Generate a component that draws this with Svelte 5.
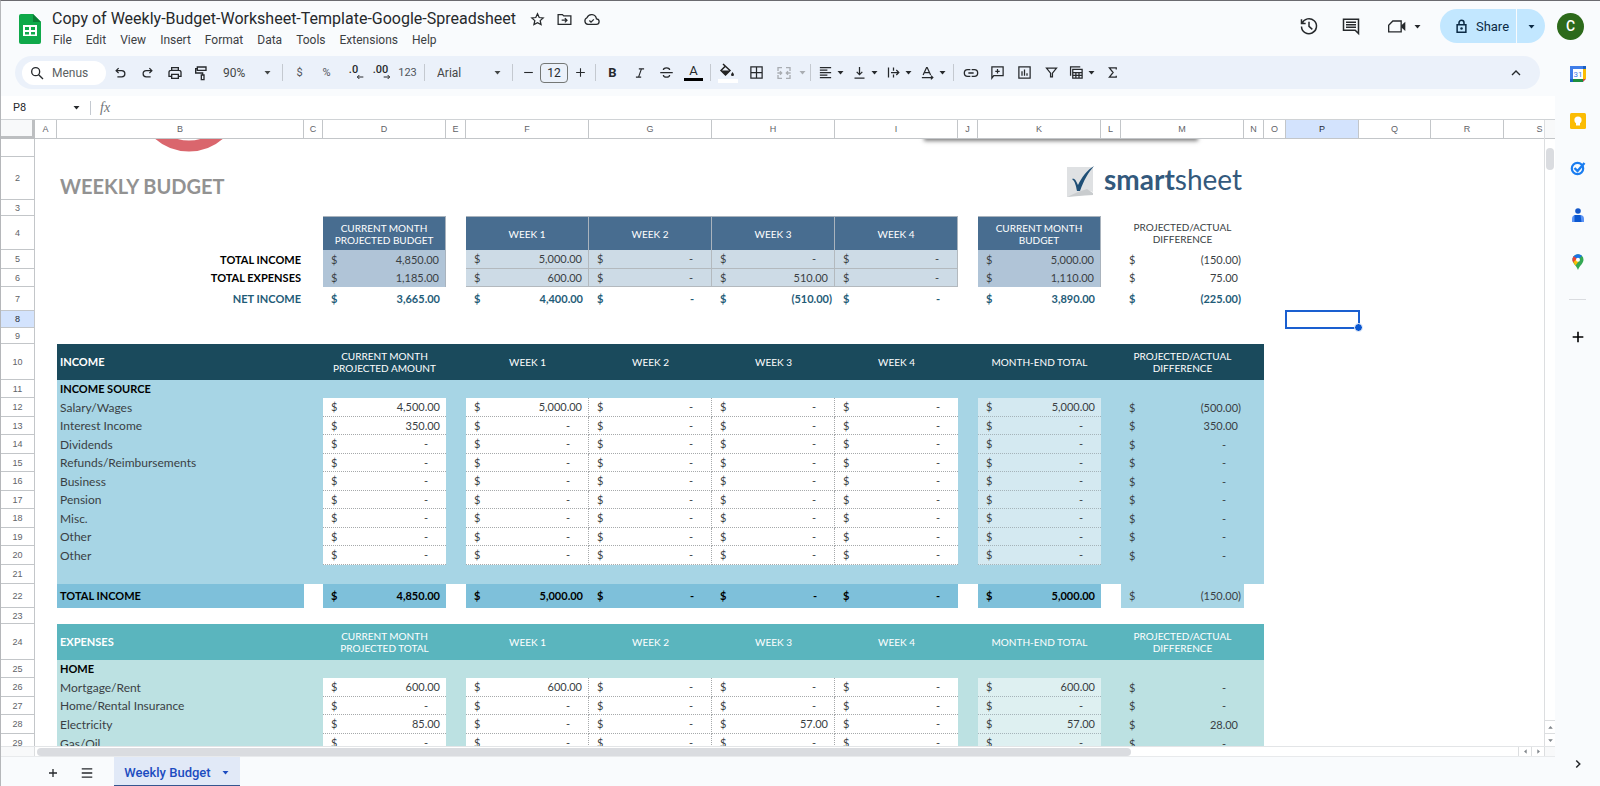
<script>
  const menus = ['File', 'Edit', 'View', 'Insert', 'Format', 'Data', 'Tools', 'Extensions', 'Help'];
  const cols = 'ABCDEFGHIJKLMNOPQRS'.split('');
  const moneyCols = ['D', 'F', 'G', 'H', 'I', 'K', 'M'];

  // s = stroked path, f = filled path, both on a 24 x 24 grid
  const icons = {
    star: { s: 'M12 4l2.4 5.2 5.6.6-4.2 3.8 1.2 5.6-5-2.8-5 2.8 1.2-5.6L4 9.8l5.6-.6z' },
    move: { s: 'M3 5h6l2 2h10v12H3zM8 13h7M12.500 10l3 3-3 3' },
    cloud: { s: 'M7 19h11.500a4 4 0 0 0 .5-8 7 7 0 0 0-13.400-1.500A5 5 0 0 0 7 19zM9 13.500l2.300 2.300 4-4' },
    history: { s: 'M3 4v5h5M3.600 9A9 9 0 1 1 3 12.500M12 7v5.500l4 3.500' },
    comments: { s: 'M21 21l-4-4H3V4h18zM6 7.500h12M6 10.500h12M6 13.500h12' },
    video: { s: 'M7 6h10v13H2v-8z', f: 'M17 11.500l5-4.500v11l-5-4.500z' },
    lock: { s: 'M5 9h14v12H5zM8 9V6a4 4 0 0 1 8 0v3', f: 'M12 13a2 2 0 1 0 0 4 2 2 0 0 0 0-4z' },
    search: { s: 'M10 4a6 6 0 1 0 0 12 6 6 0 0 0 0-12zM14.500 14.500L21 21' },
    undo: { s: 'M5 9h9a5 5 0 0 1 0 10H7M9 5L5 9l4 4' },
    redo: { s: 'M19 9h-9a5 5 0 0 0 0 10h7M15 5l4 4-4 4' },
    print: { s: 'M7 8V4h10v4M7 17H3v-6a3 3 0 0 1 3-3h12a3 3 0 0 1 3 3v6h-4M7 14h10v6H7z' },
    paint: { s: 'M5 3h13v5H5zM5 5.500H2.500V12H13v3M11 15h4v7h-4z' },
    italic: { s: 'M10 5h9M5 19h9M14.500 5l-5 14' },
    strike: { s: 'M2 12h20M17 8c0-2-2-3.500-5-3.500S7 6 7 8M7 16c0 2 2 3.500 5 3.500s5-1.500 5-3.500' },
    borders: { s: 'M3 3h18v18H3zM12 3v18M3 12h18' },
    merge: { s: 'M9 4H3v5M3 15v5h6M15 4h6v5M21 15v5h-6M2 12h6M6 9.500L8.500 12 6 14.500M22 12h-6M18 9.500L15.500 12l2.500 2.500' },
    left: { s: 'M3 4h18M3 8h12M3 12h18M3 16h12M3 20h18' },
    bottom: { s: 'M12 3v12M7.500 11l4.500 4.500 4.500-4.500M4 21h16' },
    wrap: { s: 'M4 4v16M12 4v5M12 15v5M8 12h12M16.500 8l4 4-4 4' },
    rotate: { s: 'M5 16L10.500 4h1L17 16M7 12h8M3 20h17M17.500 17l3 3-3 3' },
    link: { s: 'M11 7H7a5 5 0 0 0 0 10h4M13 7h4a5 5 0 0 1 0 10h-4M8 12h8' },
    comment: { s: 'M3 21V3h18v14H6zM12 6.500v7M8.500 10h7' },
    chart: { s: 'M3 3h18v18H3zM8 10v7M12 7v10M16 13v4' },
    filter: { s: 'M4 5h16l-6.500 8v6h-3v-6z' },
    views: { s: 'M6 7h15v14H6zM6 12h15M6 16.500h15M11 12v9M16 12v9M2.500 17V3H18' },
    sigma: { s: 'M18 7V4.500H7L13 12l-6 7.500h11V17' },
    up: { s: 'M6 15l6-6 6 6' },
    next: { s: 'M9 6l6 6-6 6' },
    plus: { s: 'M12 4v16M4 12h16' },
    minus: { s: 'M4 12h16' },
    list: { s: 'M3 5h18M3 12h18M3 19h18' },
    down: { f: 'M4 8h16l-8 9z' },
    upFill: { f: 'M4 16h16l-8-9z' },
    leftFill: { f: 'M16 4v16l-9-8z' },
    rightFill: { f: 'M8 4v16l9-8z' },
    arrowLeft: { s: 'M22 12H4M10 6l-6 6 6 6' },
    arrowRight: { s: 'M2 12h18M14 6l6 6-6 6' },
  };

  const empty = ['-', '-', '-', '-', '-', '-', '-'];
  const item = (n, h, label, values = empty) => ({ n, h, kind: 'item', label, values });

  const rows = [
    { n: '', h: 18, kind: 'blank' },
    { n: 2, h: 43, kind: 'title', label: 'WEEKLY BUDGET' },
    { n: 3, h: 16, kind: 'blank' },
    { n: 4, h: 34, kind: 'sumhead', heads: ['CURRENT MONTH\nPROJECTED BUDGET', 'WEEK 1', 'WEEK 2', 'WEEK 3', 'WEEK 4', 'CURRENT MONTH\nBUDGET', 'PROJECTED/ACTUAL\nDIFFERENCE'] },
    { n: 5, h: 19, kind: 'sum', label: 'TOTAL INCOME', values: ['4,850.00', '5,000.00', '-', '-', '-', '5,000.00', '(150.00)'] },
    { n: 6, h: 18, kind: 'sum', label: 'TOTAL EXPENSES', values: ['1,185.00', '600.00', '-', '510.00', '-', '1,110.00', '75.00'] },
    { n: 7, h: 24, kind: 'net', label: 'NET INCOME', values: ['3,665.00', '4,400.00', '-', '(510.00)', '-', '3,890.00', '(225.00)'] },
    { n: 8, h: 17, kind: 'blank' },
    { n: 9, h: 16, kind: 'blank' },
    { n: 10, h: 36, kind: 'head', label: 'INCOME', heads: ['CURRENT MONTH\nPROJECTED AMOUNT', 'WEEK 1', 'WEEK 2', 'WEEK 3', 'WEEK 4', 'MONTH-END TOTAL', 'PROJECTED/ACTUAL\nDIFFERENCE'] },
    { n: 11, h: 18, kind: 'section', label: 'INCOME SOURCE' },
    item(12, 19, 'Salary/Wages', ['4,500.00', '5,000.00', '-', '-', '-', '5,000.00', '(500.00)']),
    item(13, 18, 'Interest Income', ['350.00', '-', '-', '-', '-', '-', '350.00']),
    item(14, 19, 'Dividends'),
    item(15, 18, 'Refunds/Reimbursements'),
    item(16, 19, 'Business'),
    item(17, 18, 'Pension'),
    item(18, 19, 'Misc.'),
    item(19, 18, 'Other'),
    item(20, 19, 'Other'),
    { n: 21, h: 19, kind: 'section' },
    { n: 22, h: 24, kind: 'total', label: 'TOTAL INCOME', values: ['4,850.00', '5,000.00', '-', '-', '-', '5,000.00', '(150.00)'] },
    { n: 23, h: 16, kind: 'blank' },
    { n: 24, h: 36, kind: 'head', label: 'EXPENSES', heads: ['CURRENT MONTH\nPROJECTED TOTAL', 'WEEK 1', 'WEEK 2', 'WEEK 3', 'WEEK 4', 'MONTH-END TOTAL', 'PROJECTED/ACTUAL\nDIFFERENCE'] },
    { n: 25, h: 18, kind: 'section', label: 'HOME' },
    item(26, 19, 'Mortgage/Rent', ['600.00', '600.00', '-', '-', '-', '600.00', '-']),
    item(27, 18, 'Home/Rental Insurance'),
    item(28, 19, 'Electricity', ['85.00', '-', '-', '57.00', '-', '57.00', '28.00']),
    item(29, 19, 'Gas/Oil'),
  ];

  const at = (list, col) => (list ? list[moneyCols.indexOf(col)] : undefined);
  const shape = (v) => (v === '-' ? 'dash' : v.startsWith('(') ? 'neg' : '');
</script>

{#snippet icon(name, size = 16, width = 2)}
  <svg viewBox="0 0 24 24" width={size} height={size} aria-hidden="true">
    {#if icons[name].s}
      <path d={icons[name].s} fill="none" stroke="currentColor" stroke-width={width} />
    {/if}
    {#if icons[name].f}
      <path d={icons[name].f} fill="currentColor" />
    {/if}
  </svg>
{/snippet}

{#snippet tool(name, label, size = 16)}
  <button class="tool" aria-label={label}>{@render icon(name, size)}</button>
{/snippet}

{#snippet split(name, label)}
  <button class="split" aria-label={label}>
    <span class="split-icon">{@render icon(name, 15)}</span>
    {@render icon('down', 9)}
  </button>
{/snippet}

<div class="app">
  <header>
    <svg class="logo" viewBox="0 0 22 30" width="22" height="30" aria-hidden="true">
      <path d="M2 0h12l8 8v20a2 2 0 0 1-2 2H2a2 2 0 0 1-2-2V2a2 2 0 0 1 2-2z" fill="#0fa94a" />
      <path d="M14 0l8 8h-8z" fill="#0b7d35" />
      <path d="M4 11h14v11H4z" fill="#fff" />
      <path d="M6 13h4v3H6zM12 13h4v3h-4zM6 18h4v2.500H6zM12 18h4v2.500h-4z" fill="#0fa94a" />
    </svg>
    <div class="doc">
      <div class="title-row">
        <h1>Copy of Weekly-Budget-Worksheet-Template-Google-Spreadsheet</h1>
        <button aria-label="Star">{@render icon('star', 17, 1.8)}</button>
        <button aria-label="Move">{@render icon('move', 17, 1.8)}</button>
        <button aria-label="Saved to Drive">{@render icon('cloud', 17, 1.8)}</button>
      </div>
      <nav>
        {#each menus as menu}
          <button>{menu}</button>
        {/each}
      </nav>
    </div>
    <div class="actions">
      <button aria-label="Version history">{@render icon('history', 20, 1.8)}</button>
      <button aria-label="Comments">{@render icon('comments', 20, 1.8)}</button>
      <button class="meet" aria-label="Join a call">{@render icon('video', 20, 1.6)}{@render icon('down', 9)}</button>
      <div class="share">
        <button class="share-main">{@render icon('lock', 15, 2.4)}Share</button>
        <button class="share-more" aria-label="Share options">{@render icon('down', 9)}</button>
      </div>
      <button class="avatar" aria-label="Account">C</button>
    </div>
  </header>

  <div class="body">
    <main>
      <div class="toolbar">
        <label class="search">
          {@render icon('search', 16)}
          <input type="text" placeholder="Menus" aria-label="Search the menus" />
        </label>
        {@render tool('undo', 'Undo', 15)}
        {@render tool('redo', 'Redo', 15)}
        {@render tool('print', 'Print')}
        {@render tool('paint', 'Paint format')}
        <label class="pick zoom">
          <select aria-label="Zoom"><option>90%</option></select>
          {@render icon('down', 9)}
        </label>
        <i class="sep"></i>
        <button class="tool small">$</button>
        <button class="tool small">%</button>
        <button class="tool dec" aria-label="Decrease decimal places"><b>.0</b><span>{@render icon('arrowLeft', 8, 3)}</span></button>
        <button class="tool dec" aria-label="Increase decimal places"><b>.00</b><span>{@render icon('arrowRight', 8, 3)}</span></button>
        <button class="tool small">123</button>
        <i class="sep"></i>
        <label class="pick font">
          <select aria-label="Font"><option>Arial</option></select>
          {@render icon('down', 9)}
        </label>
        <i class="sep"></i>
        <button class="step" aria-label="Decrease font size">{@render icon('minus', 13)}</button>
        <input class="size" type="text" value="12" aria-label="Font size" />
        <button class="step" aria-label="Increase font size">{@render icon('plus', 13)}</button>
        <i class="sep"></i>
        <button class="tool bold">B</button>
        {@render tool('italic', 'Italic', 14)}
        {@render tool('strike', 'Strikethrough', 15)}
        <button class="tool color">A<span></span></button>
        <i class="sep"></i>
        <button class="tool fill" aria-label="Fill color">
          <svg viewBox="0 0 20 20" width="20" height="20" aria-hidden="true">
            <path d="M5 1l7 6.500-4.500 4.500L3 7.500 7.500 3" fill="none" stroke="#222" stroke-width="1.500" />
            <path d="M3 7.500h9L7.500 12zM14.500 9c2 2.500 2 4 0 4s-2-1.500 0-4z" fill="#222" />
            <path d="M0 16h20v4H0z" fill="#fff" />
          </svg>
        </button>
        <button class="tool wide" aria-label="Borders">{@render icon('borders', 15)}</button>
        <button class="split merge" aria-label="Merge cells">
          <span class="split-icon">{@render icon('merge', 16)}</span>
          {@render icon('down', 9)}
        </button>
        <i class="sep"></i>
        {@render split('left', 'Horizontal align')}
        {@render split('bottom', 'Vertical align')}
        {@render split('wrap', 'Text wrapping')}
        {@render split('rotate', 'Text rotation')}
        <i class="sep"></i>
        {@render tool('link', 'Insert link')}
        {@render tool('comment', 'Insert comment', 15)}
        {@render tool('chart', 'Insert chart', 15)}
        {@render tool('filter', 'Create a filter', 15)}
        {@render split('views', 'Filter views')}
        {@render tool('sigma', 'Functions', 15)}
        <button class="collapse" aria-label="Hide the menus">{@render icon('up', 16)}</button>
      </div>

      <div class="formula">
        <input class="name" type="text" value="P8" aria-label="Name box" />
        <button aria-label="Named ranges">{@render icon('down', 9)}</button>
        <i class="sep"></i>
        <span class="fx">fx</span>
        <input class="entry" type="text" aria-label="Formula" />
      </div>

      <div class="view">
        <div class="sheet">
          <table>
            <colgroup>
              <col class="w-head" />
              {#each cols as col}
                <col class="w-{col}" />
              {/each}
            </colgroup>
            <thead>
              <tr>
                <th class="corner" aria-label="Select all"></th>
                {#each cols as col}
                  <th class:picked={col === 'P'}>{col}</th>
                {/each}
              </tr>
            </thead>
            <tbody>
              {#each rows as row}
                <tr class="{row.kind} {row.n >= 24 ? 'expenses' : 'income'}" style="height: {row.h}px">
                  <th class:picked={row.n === 8}>{row.n}</th>
                  {#each cols as col}
                    {@const value = at(row.values, col)}
                    <td class={col}>
                      {#if col === 'B'}
                        {row.label ?? ''}
                      {:else if value}
                        <div class="money {shape(value)}"><span>$</span><span>{value}</span></div>
                      {:else if at(row.heads, col)}
                        {at(row.heads, col)}
                      {:else if col === 'P' && row.n === 8}
                        <span class="selection"></span>
                      {/if}
                    </td>
                  {/each}
                </tr>
              {/each}
            </tbody>
          </table>

          <div class="floating">
            <svg class="ring" viewBox="0 0 104 104" width="104" height="104" aria-hidden="true">
              <circle cx="52" cy="52" r="46" fill="none" stroke="#da666d" stroke-width="11" />
            </svg>
            <div class="card"></div>
            <div class="brand">
              <svg viewBox="0 0 30 32" width="30" height="32" aria-hidden="true">
                <path d="M1 1h26v25l-6-2-8 5-12 2z" fill="#dfe1e3" />
                <path d="M1 31l11-5 9-3 6 4v2l-8 .5z" fill="#c9ccce" />
                <path d="M6 13c3-1 4 2 6 6 4-8 9-15 16-19-6 7-10 14-14 25h-3C10 20 9 15 6 13z" fill="#1f4f76" />
              </svg>
              <span><b>smart</b>sheet</span>
            </div>
          </div>
        </div>
        <div class="vbar">
          <span class="vhead"></span>
          <span class="vthumb"></span>
          <button aria-label="Scroll up">{@render icon('upFill', 7)}</button>
          <button aria-label="Scroll down">{@render icon('down', 7)}</button>
        </div>
      </div>
      <div class="hbar">
        <span class="hcorner"></span>
        <div class="htrack"><span></span></div>
        <button aria-label="Scroll left">{@render icon('leftFill', 7)}</button>
        <button aria-label="Scroll right">{@render icon('rightFill', 7)}</button>
        <span class="hend"></span>
      </div>
      <footer>
        <button class="foot" aria-label="Add sheet">{@render icon('plus', 12, 2.6)}</button>
        <button class="foot" aria-label="All sheets">{@render icon('list', 14, 2.4)}</button>
        <button class="tab">Weekly Budget {@render icon('down', 9)}</button>
      </footer>
    </main>

    <aside>
      <button aria-label="Calendar">
        <svg viewBox="0 0 16 16" width="16" height="16" aria-hidden="true">
          <path d="M0 0h16v16H0z" fill="#3f7de8" />
          <path d="M13 3h3v10h-3z" fill="#fbbc04" />
          <path d="M3 13h10v3H0v-3z" fill="#1e8e3e" />
          <path d="M13 0h3v3h-3zM0 13h3v3H0z" fill="#1b5fc2" />
          <path d="M13 13h3l-3 3z" fill="#ea4335" />
          <path d="M16 13v3h-3z" fill="#f9fbfd" />
          <path d="M3 3h10v10H3z" fill="#fff" />
          <text x="8" y="11" text-anchor="middle" font-size="8" fill="#3f7de8">31</text>
        </svg>
      </button>
      <button aria-label="Keep">
        <svg viewBox="0 0 16 16" width="16" height="16" aria-hidden="true">
          <rect width="16" height="16" rx="1.500" fill="#fbbc04" />
          <circle cx="8" cy="7" r="3.600" fill="#fff" />
          <path d="M6 9h4v3.500H6z" fill="#fff" />
        </svg>
      </button>
      <button aria-label="Tasks">
        <svg viewBox="0 0 16 16" width="16" height="16" aria-hidden="true">
          <circle cx="7.500" cy="8.500" r="5.700" fill="none" stroke="#1a7df0" stroke-width="2.200" />
          <path d="M4.500 8l3 3L14.500 3" fill="none" stroke="#1a7df0" stroke-width="2.400" />
        </svg>
      </button>
      <button aria-label="Contacts">
        <svg viewBox="0 0 16 16" width="16" height="16" aria-hidden="true">
          <circle cx="8" cy="4" r="2.800" fill="#1558c9" />
          <path d="M2 15v-3a4 4 0 0 1 4-4h4a4 4 0 0 1 4 4v3z" fill="#5b93f5" />
          <path d="M4.500 15v-7h6l1 7z" fill="#0b57d0" />
        </svg>
      </button>
      <button aria-label="Maps">
        <svg viewBox="0 0 16 16" width="16" height="16" aria-hidden="true">
          <path d="M8 16C6.500 11.500 2.500 9.500 2.500 5.700A5.500 5.500 0 0 1 13.500 5.700C13.500 9.500 9.500 11.500 8 16z" fill="#34a853" />
          <path d="M4 9.200L12 1.800A5.500 5.500 0 0 0 3.800 2.200L2.700 4.500z" fill="#1a73e8" />
          <path d="M3.800 2.200L8 5.500 3.300 8.500A5.500 5.500 0 0 1 3.800 2.200z" fill="#ea4335" />
          <path d="M3.300 8.300L6.500 5 8.500 7.500 5.500 11.400z" fill="#fbbc04" />
          <circle cx="8" cy="5.700" r="2" fill="#fff" />
        </svg>
      </button>
      <hr />
      <button class="add" aria-label="Get add-ons">{@render icon('plus', 16, 2.4)}</button>
      <button class="hide" aria-label="Hide side panel">{@render icon('next', 14, 2.6)}</button>
    </aside>
  </div>
</div>

<style>
  :global(body) {
    margin: 0;
  }

  .app {
    display: flex;
    flex-direction: column;
    height: 100vh;
    overflow: hidden;
    box-sizing: border-box;
    border-top: 1px solid #6b6b70;
    border-left: 1px solid #b5b7ba;
    background: #f9fbfd;
    color: #26292c;
    font-family: Roboto, 'Liberation Sans', sans-serif;
    font-size: 12px;
  }

  .app * {
    box-sizing: border-box;
  }

  svg {
    display: block;
    flex: none;
  }

  button,
  input,
  select {
    margin: 0;
    padding: 0;
    border: 0;
    background: none;
    color: inherit;
    font: inherit;
    outline: none;
  }

  button {
    display: flex;
    align-items: center;
    justify-content: center;
    flex: none;
  }

  header {
    display: flex;
    flex: none;
    height: 55px;
    padding: 0 16px 0 18px;
  }

  .logo {
    margin-top: 13px;
  }

  .doc {
    padding: 7px 0 0 11px;
  }

  .title-row {
    display: flex;
    align-items: center;
    gap: 10px;
    height: 22px;
  }

  h1 {
    margin: 0 3px 0 0;
    font-size: 16px;
    font-weight: 400;
    line-height: 22px;
    white-space: nowrap;
  }

  nav {
    display: flex;
    gap: 14px;
    padding: 1px 0 0 1px;
    color: #3c4043;
  }

  nav button {
    height: 18px;
  }

  .actions {
    display: flex;
    align-items: center;
    gap: 22px;
    height: 50px;
    margin-left: auto;
  }

  .meet {
    gap: 6px;
    margin-left: 4px;
  }

  .share {
    display: flex;
    gap: 1px;
    height: 34px;
    margin: 0 -10px 0 -4px;
    border-radius: 17px;
    overflow: hidden;
  }

  .share button {
    height: 34px;
    background: #c2e7ff;
    color: #0b2a44;
  }

  .share-main {
    gap: 7px;
    width: 76px;
    font-size: 13px;
    padding-left: 7px;
  }

  .share-more {
    width: 28px;
  }

  .avatar {
    width: 27px;
    height: 27px;
    border-radius: 50%;
    background: #2d6a1b;
    color: #fff;
    font-size: 14px;
    font-weight: 500;
  }

  .body {
    display: flex;
    flex: 1;
    min-height: 0;
  }

  main {
    display: flex;
    flex: 1;
    flex-direction: column;
    min-width: 0;
  }

  .toolbar {
    display: flex;
    flex: none;
    align-items: center;
    height: 33px;
    margin: 0 15px 7px 14px;
    padding: 0 16px 0 7px;
    border-radius: 17px;
    background: #ebf1fa;
  }

  .search {
    display: flex;
    align-items: center;
    gap: 7px;
    width: 84px;
    height: 24px;
    margin-right: 1px;
    padding-left: 7px;
    border-radius: 12px;
    background: #fff;
  }

  .search input {
    width: 50px;
  }

  .search input::placeholder {
    color: #5b5f63;
    opacity: 1;
  }

  .tool {
    width: 27px;
    height: 24px;
  }

  .tool.small {
    color: #50545a;
    font-size: 11px;
  }

  .tool.bold {
    font-size: 13px;
    font-weight: 700;
  }

  .dec {
    flex-direction: column;
    font-size: 11px;
    line-height: 11px;
  }

  .dec b {
    font-weight: 500;
  }

  .dec span {
    align-self: flex-end;
    margin: -2px 3px 0 0;
  }

  .color {
    flex-direction: column;
    font-size: 13px;
    line-height: 14px;
  }

  .color span {
    width: 19px;
    height: 3px;
    background: #000;
  }

  .fill,
  .wide {
    width: 28px;
  }

  .sep {
    flex: none;
    width: 1px;
    height: 17px;
    margin: 0 3px;
    background: #c4c9d0;
  }

  .pick {
    display: flex;
    align-items: center;
    height: 24px;
    color: #444746;
  }

  .pick select {
    flex: 1;
    min-width: 0;
    appearance: none;
  }

  .zoom {
    width: 64px;
    padding: 0 7px 0 8px;
  }

  .font {
    width: 81px;
    padding: 0 7px 0 9px;
  }

  .step {
    width: 24px;
    height: 24px;
  }

  .size {
    width: 28px;
    height: 20px;
    border: 1px solid #747775;
    border-radius: 4px;
    text-align: center;
  }

  .split {
    justify-content: flex-start;
    width: 34px;
    height: 24px;
  }

  .split-icon {
    display: flex;
    justify-content: center;
    width: 22px;
  }

  .merge {
    width: 37px;
    color: #a9adb2;
  }

  .merge .split-icon {
    width: 28px;
  }

  .collapse {
    margin-left: auto;
  }

  .formula {
    display: flex;
    flex: none;
    align-items: center;
    height: 24px;
    border-bottom: 1px solid #d0d3d6;
    background: #fff;
  }

  .name {
    width: 71px;
    padding-left: 12px;
    font-size: 11px;
  }

  .formula .sep {
    height: 14px;
    margin: 0 9px;
  }

  .fx {
    color: #6f7478;
    font-family: 'Liberation Serif', serif;
    font-size: 14px;
    font-style: italic;
  }

  .entry {
    flex: 1;
    margin-left: 8px;
  }

  .view {
    display: flex;
    flex: 1;
    min-height: 0;
    background: #fff;
  }

  .sheet {
    position: relative;
    flex: 1;
    min-width: 0;
    overflow: hidden;
  }

  table {
    table-layout: fixed;
    width: 1575px;
    border-collapse: separate;
    border-spacing: 0;
    font-size: 12px;
    line-height: 12px;
  }

  .w-head { width: 34px; }
  .w-A, .w-O { width: 22px; }
  .w-B { width: 247px; }
  .w-C { width: 19px; }
  .w-D, .w-F, .w-G, .w-H, .w-I, .w-K, .w-M { width: 123px; }
  .w-E, .w-J, .w-L, .w-N { width: 20px; }
  .w-P, .w-R { width: 73px; }
  .w-Q, .w-S { width: 72px; }

  th {
    padding: 0;
    border: 0 solid #c3c6c9;
    border-width: 0 1px 1px 0;
    background: #fff;
    color: #5f6368;
    font-family: 'Liberation Sans', sans-serif;
    font-size: 9px;
    font-weight: 400;
  }

  thead th {
    height: 19px;
  }

  th.corner {
    border: 0 solid #bdbfc1;
    border-width: 0 3px 3px 0;
    background: #f8f9fa;
  }

  th.picked {
    background: #d3e3fd;
    color: #1f2937;
  }

  td {
    padding: 0;
    color: #3a3f44;
    font-family: 'Century Gothic', Lato, sans-serif;
    text-align: center;
    white-space: pre-line;
    vertical-align: middle;
  }

  td.B {
    padding: 0 3px;
    text-align: left;
  }

  .money {
    display: flex;
    justify-content: space-between;
    padding: 0 6px 0 8px;
    font-size: 11px;
  }

  .money.neg {
    padding-right: 3px;
  }

  .money.dash {
    padding-right: 18px;
  }

  .title td.B {
    padding-bottom: 4px;
    color: #929292;
    font-size: 20px;
    font-weight: 700;
    line-height: 20px;
    vertical-align: bottom;
  }

  .sumhead td, .head td {
    font-size: 10px;
  }

  .sumhead .D, .sumhead .F, .sumhead .G, .sumhead .H, .sumhead .I, .sumhead .K {
    border: 1px solid #a9b3bd;
    border-width: 1px 1px 0 0;
    background: #486d90;
    color: #fff;
  }

  .sum td.B, .net td.B {
    color: #000;
    font-size: 11px;
    font-weight: 700;
    text-align: right;
  }

  .sum .D, .sum .K {
    border-right: 1px solid #a9b3bd;
    background: #b0c4d7;
  }

  .sum .F, .sum .G, .sum .H, .sum .I {
    border-right: 1px solid #b3b9be;
    border-bottom: 1px solid #b3b9be;
    background: #cddbe6;
  }

  .net td, .net td.B {
    color: #1f5c78;
    font-weight: 700;
  }

  .head td {
    background: #1a4a5c;
    color: #fff;
  }

  .head td.B {
    font-size: 11px;
    font-weight: 700;
  }

  .section td, .item td {
    background: #a7d5e5;
  }

  .section td.B {
    color: #000;
    font-size: 11px;
    font-weight: 700;
  }

  .item .D, .item .F, .item .G, .item .H, .item .I {
    border-bottom: 1px dotted #a6a9ab;
    background: #fff;
  }

  .item .F, .item .G, .item .H {
    border-right: 1px dotted #a6a9ab;
  }

  .item .K {
    border-bottom: 1px dotted #a6b4ba;
    background: #d4e9f1;
  }

  .total .B, .total .D, .total .F, .total .G, .total .H, .total .I, .total .K {
    background: #7ec0da;
    color: #000;
    font-weight: 700;
  }

  .total td.B {
    font-size: 11px;
  }

  .total .M {
    background: #a7d5e5;
  }

  .expenses.head td {
    background: #5ab5be;
  }

  .expenses.section td, .expenses.item td {
    background: #bce1e2;
  }

  .expenses.item .D, .expenses.item .F, .expenses.item .G, .expenses.item .H, .expenses.item .I {
    background: #fff;
  }

  .expenses.item .K {
    background: #def0f1;
  }

  /* the blocks stop after column N */
  tr .A, tr .O, tr .P, tr .Q, tr .R, tr .S {
    background: #fff !important;
  }

  td.P {
    position: relative;
  }

  .selection {
    position: absolute;
    z-index: 1;
    inset: -1px;
    border: 2px solid #1a5fd0;
  }

  .selection::after {
    content: '';
    position: absolute;
    right: -5px;
    bottom: -5px;
    width: 7px;
    height: 7px;
    border: 1px solid #fff;
    border-radius: 50%;
    background: #0b57d0;
    box-sizing: content-box;
  }

  .floating {
    position: absolute;
    inset: 19px 0 0 34px;
    overflow: hidden;
    pointer-events: none;
  }

  .ring {
    position: absolute;
    left: 102px;
    top: -91px;
  }

  .card {
    position: absolute;
    left: 890px;
    top: -60px;
    width: 272px;
    height: 59px;
    background: #fff;
    box-shadow: 0 2px 4px 1px rgba(0, 0, 0, 0.5);
  }

  .brand {
    position: absolute;
    left: 1031px;
    top: 27px;
    display: flex;
    gap: 8px;
    color: #33597c;
    font-family: Lato, sans-serif;
    font-size: 28px;
    line-height: 26px;
  }

  .vbar {
    display: flex;
    flex: none;
    flex-direction: column;
    width: 11px;
    border-left: 1px solid #dcdee0;
  }

  .vhead {
    height: 19px;
    border-bottom: 1px solid #c3c6c9;
    background: #f8f9fa;
  }

  .vthumb {
    height: 22px;
    margin: 9px 1px auto;
    border-radius: 4px;
    background: #dadce0;
  }

  .vbar button {
    height: 13px;
    border-top: 1px solid #dcdee0;
    color: #80868b;
  }

  .hbar {
    display: flex;
    flex: none;
    height: 11px;
    border-top: 1px solid #e3e5e7;
    border-bottom: 1px solid #e8eaec;
    background: #fff;
  }

  .hcorner {
    width: 34px;
    border-right: 1px solid #dcdee0;
    background: #f8f9fa;
  }

  .htrack {
    flex: 1;
    padding: 1px 2px;
  }

  .htrack span {
    display: block;
    width: 74%;
    height: 8px;
    border-radius: 4px;
    background: #dadce0;
  }

  .hbar button {
    width: 13px;
    border-left: 1px solid #dcdee0;
    color: #80868b;
  }

  .hend {
    width: 11px;
    border-left: 1px solid #dcdee0;
    background: #f8f9fa;
  }

  footer {
    display: flex;
    flex: none;
    height: 29px;
    padding-left: 35px;
  }

  .foot {
    width: 34px;
    padding-top: 2px;
  }

  .tab {
    gap: 10px;
    width: 126px;
    margin-left: 10px;
    padding-top: 2px;
    border-bottom: 1px solid #35568f;
    background: #e1e9f7;
    color: #1c4cc0;
    font-size: 13px;
    font-weight: 500;
  }

  aside {
    display: flex;
    flex: none;
    flex-direction: column;
    align-items: center;
    gap: 31px;
    width: 45px;
    padding: 10px 0 14px;
  }

  aside button {
    height: 16px;
  }

  hr {
    width: 17px;
    height: 1px;
    margin: -2px 0 0;
    border: 0;
    background: #dadce0;
  }

  .add {
    margin-top: -2px;
    color: #000;
  }

  .hide {
    margin-top: auto;
  }
</style>
